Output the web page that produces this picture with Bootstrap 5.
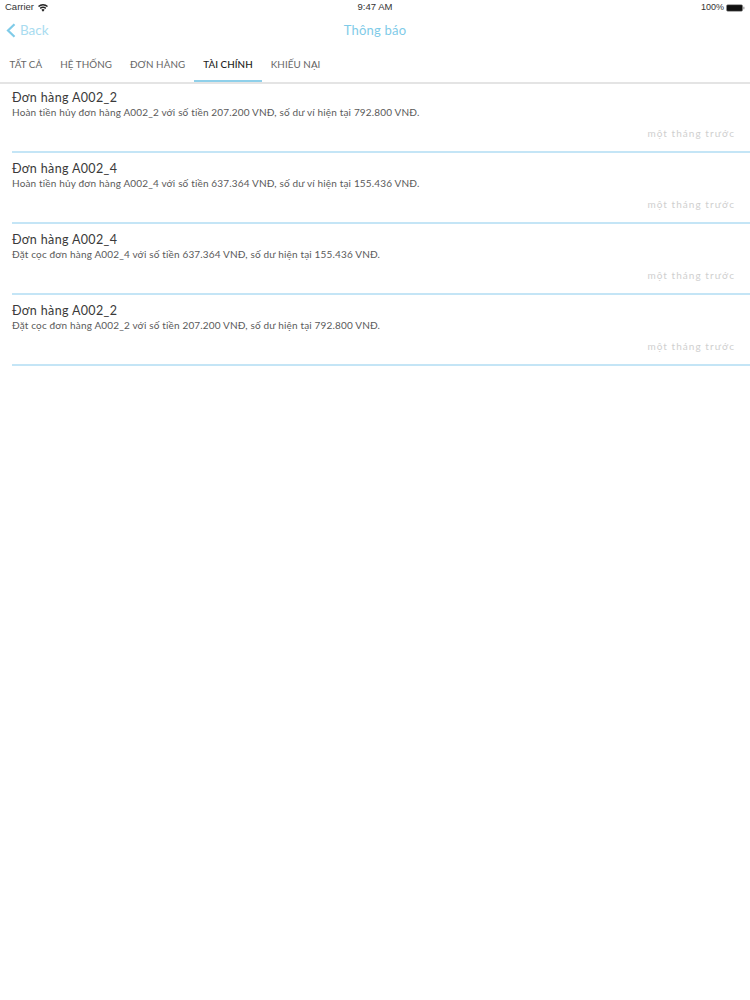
<!DOCTYPE html>
<html lang="vi">
<head>
<meta charset="utf-8">
<title>Thông báo</title>
<link href="https://cdn.jsdelivr.net/npm/bootstrap@5.3.0/dist/css/bootstrap.min.css" rel="stylesheet">
<style>
html,body{height:100%;background:#fff}
body{font-family:"Lato","Noto Sans",sans-serif;color:#2b2b2b}
.status-strip{height:15px;font-family:"Liberation Sans",sans-serif;font-size:9.5px;color:#333;padding:0 5px 0 5px}
.status-strip>div{flex:1 1 0}
.clock-text{font-weight:500;font-size:9.5px}
.pct-text{font-size:9px;margin-right:2px}
.head-bar{height:31px;color:#7fcbe8;font-size:13.5px;position:relative}
.back-link{color:#a9dcf0;font-size:13.5px;padding-left:6px;text-decoration:none}
.head-title{color:#7fcbe8;font-size:13px;letter-spacing:.2px}
.tab-strip{height:36px;padding-left:.5px;box-shadow:0 2px 0 #e4e4e4;position:relative}
.tab-item{font-size:9.8px;color:#666;padding:2px 9px 0;text-decoration:none;letter-spacing:.08px;border-bottom:2px solid transparent}
.tab-item.on{color:#222;border-bottom-color:#8fd0ea;font-weight:500}
.notice-row{height:71px;margin-left:12px;border-bottom:2px solid #c4e5f6;padding-top:8px}
.notice-head{font-size:12.5px;line-height:16px;color:#3a3a3a;letter-spacing:.35px}
.notice-text{font-size:10px;line-height:13px;color:#5a5a5a;letter-spacing:.16px}
.notice-time{font-size:10px;line-height:13px;color:#cfcfcf;padding-right:15px;margin-top:8px;letter-spacing:1.05px}
</style>
</head>
<body>
<div class="status-strip d-flex align-items-center">
  <div class="d-flex align-items-center gap-1"><span>Carrier</span>
    <svg width="10" height="8" viewBox="0 0 11 8" aria-hidden="true"><path d="M5.5 8 3.7 5.9a2.7 2.7 0 0 1 3.6 0zM2.9 5 1.9 3.8a5.5 5.5 0 0 1 7.2 0L8.1 5a4 4 0 0 0-5.2 0zM1.1 3 0 1.8a8.3 8.3 0 0 1 11 0L9.900 3a6.800 6.800 0 0 0-8.800 0z" fill="#222"/></svg>
  </div>
  <div class="text-center clock-text">9:47 AM</div>
  <div class="d-flex align-items-center justify-content-end"><span class="pct-text">100%</span>
    <svg width="19" height="8" viewBox="0 0 20 8" aria-hidden="true"><rect x=".5" y=".5" width="17" height="7" rx="1.500" fill="#111" stroke="#999" stroke-width=".6"/><rect x="18.200" y="2.700" width="1.200" height="2.600" fill="#999"/></svg>
  </div>
</div>
<div class="head-bar d-flex align-items-center justify-content-center">
  <a class="back-link d-flex align-items-center gap-1 position-absolute start-0" href="#">
    <svg width="10" height="15" viewBox="0 0 10 15" aria-hidden="true"><path d="M8.500 1.200 2 7.500l6.500 6.300" fill="none" stroke="#7fcbe8" stroke-width="2.200"/></svg>
    <span>Back</span>
  </a>
  <span class="head-title">Thông báo</span>
</div>
<nav class="tab-strip d-flex align-items-stretch">
  <a class="tab-item d-flex align-items-center" href="#">TẤT CẢ</a>
  <a class="tab-item d-flex align-items-center" href="#">HỆ THỐNG</a>
  <a class="tab-item d-flex align-items-center" href="#">ĐƠN HÀNG</a>
  <a class="tab-item on d-flex align-items-center" href="#">TÀI CHÍNH</a>
  <a class="tab-item d-flex align-items-center" href="#">KHIẾU NẠI</a>
</nav>
<main>
  <div class="notice-row">
    <div class="notice-head">Đơn hàng A002_2</div>
    <div class="notice-text">Hoàn tiền hủy đơn hàng A002_2 với số tiền 207.200 VNĐ, số dư ví hiện tại 792.800 VNĐ.</div>
    <div class="notice-time text-end">một tháng trước</div>
  </div>
  <div class="notice-row">
    <div class="notice-head">Đơn hàng A002_4</div>
    <div class="notice-text">Hoàn tiền hủy đơn hàng A002_4 với số tiền 637.364 VNĐ, số dư ví hiện tại 155.436 VNĐ.</div>
    <div class="notice-time text-end">một tháng trước</div>
  </div>
  <div class="notice-row">
    <div class="notice-head">Đơn hàng A002_4</div>
    <div class="notice-text">Đặt cọc đơn hàng A002_4 với số tiền 637.364 VNĐ, số dư hiện tại 155.436 VNĐ.</div>
    <div class="notice-time text-end">một tháng trước</div>
  </div>
  <div class="notice-row">
    <div class="notice-head">Đơn hàng A002_2</div>
    <div class="notice-text">Đặt cọc đơn hàng A002_2 với số tiền 207.200 VNĐ, số dư hiện tại 792.800 VNĐ.</div>
    <div class="notice-time text-end">một tháng trước</div>
  </div>
</main>
<script src="https://cdn.jsdelivr.net/npm/bootstrap@5.3.0/dist/js/bootstrap.bundle.min.js"></script>
</body>
</html>
